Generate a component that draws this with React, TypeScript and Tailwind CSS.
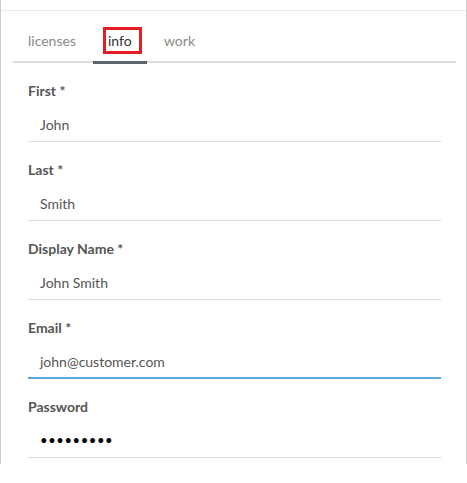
const fields = [
  { label: "First *", value: "John" },
  { label: "Last *", value: "Smith" },
  { label: "Display Name *", value: "John Smith" },
  { label: "Email *", value: "john@customer.com", focused: true },
  { label: "Password", value: "•••••••••", password: true },
];

export default function App() {
  return (
    <div className="h-[483px] w-[467px] bg-white" style={{ fontFamily: "Lato, 'Open Sans', sans-serif" }}>
      <div className="h-[464px] border-x border-[#cccccc]">
        <div className="h-[11px] border-b border-[#ececec]" />

        {/* tabs */}
        <div className="ml-[12px] mr-[10px] flex h-[52px] gap-[2px] border-b-2 border-[#dddddd] text-[14px]">
          <div className="flex items-center px-[15px] pt-[8px] text-[#8a8a8a]">licenses</div>
          <div className="relative -mb-[3px] flex w-[54px] items-center border-b-[3px] border-[#5b6570] pl-[10px] pt-[9px] text-[#333333]">
            <span className="border-[3px] border-[#e51c24] pl-[2px] pr-[7px] leading-[21px]">info</span>
          </div>
          <div className="flex items-center px-[15px] pt-[8px] text-[#8a8a8a]">work</div>
        </div>

        {/* form */}
        <div className="ml-[27px] mr-[25px] pt-[20px]">
          {fields.map((f) => (
            <div key={f.label} className="mb-[20px]">
              <div className="h-[16px] text-[14px] font-bold leading-[16px] text-[#555555]">{f.label}</div>
              <div
                className={
                  "mt-[5px] flex h-[38px] items-center pl-[12px] pt-[4px] " +
                  (f.focused ? "border-b-2 border-[#5aa6e0]" : "border-b border-[#dddddd]")
                }
              >
                <span
                  className={
                    f.password
                      ? "text-[13px] tracking-[0.6px] text-black"
                      : "text-[14px] text-[#555555]"
                  }
                >
                  {f.value}
                </span>
              </div>
            </div>
          ))}
        </div>
      </div>
    </div>
  );
}
